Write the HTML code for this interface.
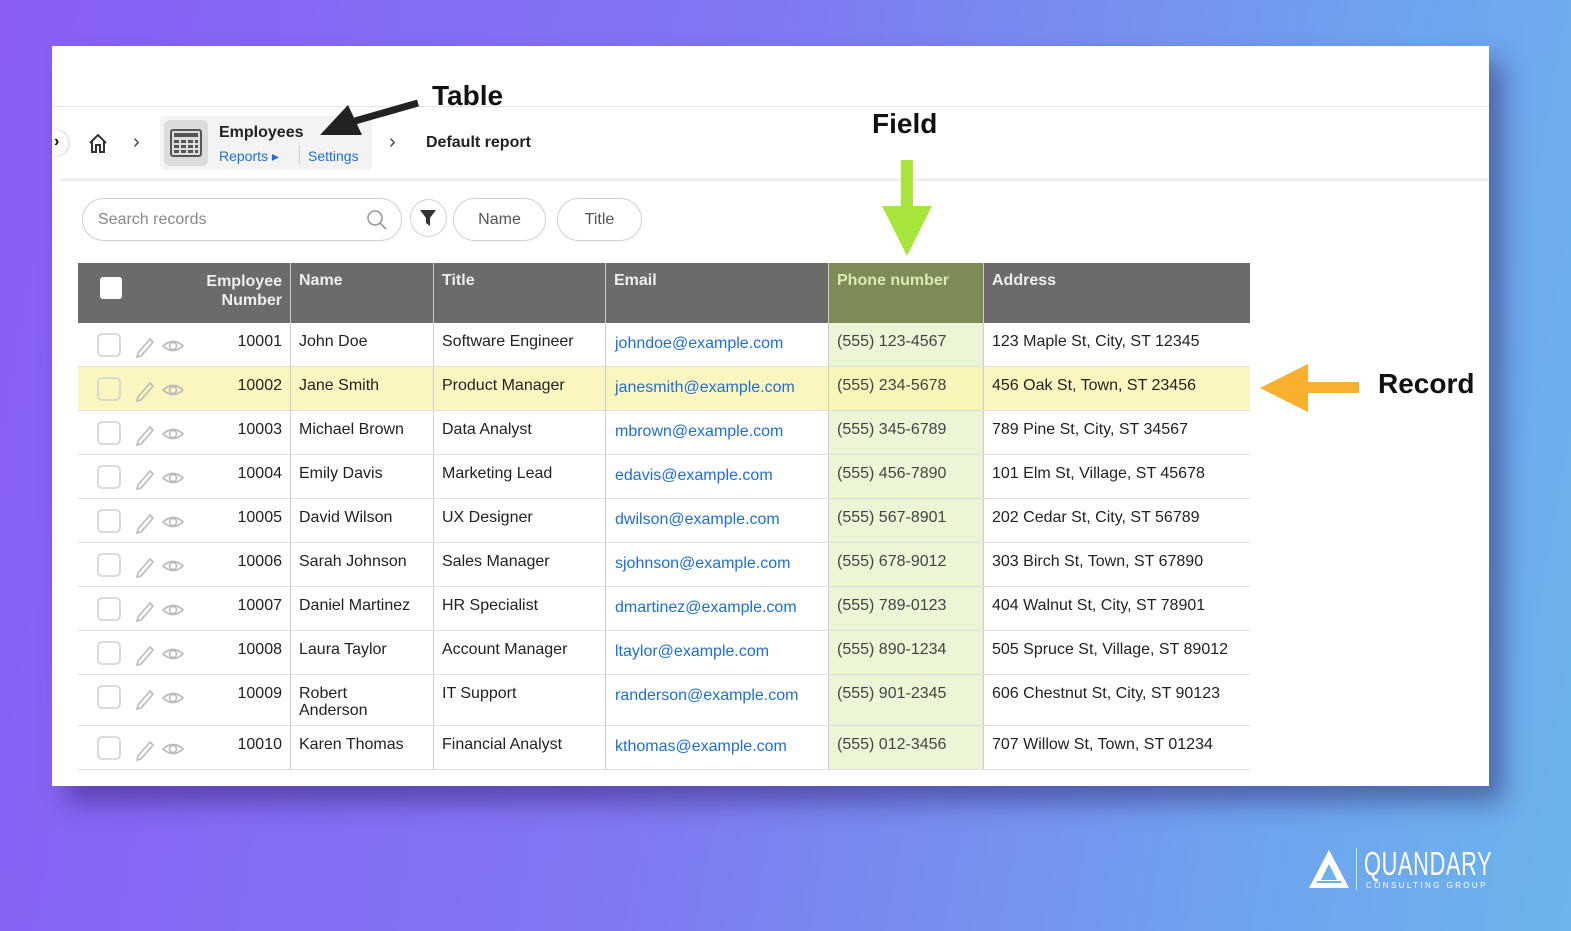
<!DOCTYPE html>
<html><head><meta charset="utf-8"><style>
*{margin:0;padding:0;box-sizing:border-box}
body{width:1571px;height:931px;overflow:hidden;position:relative;font-family:"Liberation Sans",sans-serif;background:linear-gradient(100deg,#8a5ef6 0%,#7f78f2 45%,#6fa2ee 80%,#6cb4ec 100%)}
.card{position:absolute;left:52px;top:46px;width:1437px;height:740px;background:#fff;box-shadow:14px 16px 24px rgba(40,20,90,.45)}
.a{position:absolute;white-space:nowrap}
.t{font-size:16px;color:#222}
.lnk{color:#1d6fd6}
.hd{font-size:16px;font-weight:bold;color:#eee}
.row{position:absolute;left:78px;width:1172px;border-bottom:1.5px solid #e0e0e0}
.vl{position:absolute;width:1px;background:#ddd}
</style></head><body>
<div class="card"></div>
<div class="a" style="left:52px;top:106px;width:1437px;height:1px;background:#e5e5e5"></div>
<div class="a" style="left:60px;top:178px;width:1429px;height:3px;background:#f0f0f0"></div>
<div class="a" style="left:52px;top:130px;width:16px;height:26px;border-radius:0 13px 13px 0;background:#fff;box-shadow:1px 0 3px rgba(0,0,0,.2)"></div>
<div class="a" style="left:54px;top:133px;font-size:16px;font-weight:bold">›</div>
<svg class="a" style="left:87px;top:132px" width="22" height="22" viewBox="0 0 22 22" fill="none" stroke="#333" stroke-width="2"><path d="M3 11 L11 3 L19 11 M5 9 V20 H9 V13 H13 V20 H17 V9"/></svg>
<div class="a" style="left:133px;top:131px;font-size:20px;color:#444">›</div>
<div class="a" style="left:160px;top:116px;width:212px;height:54px;background:#f3f3f3;border-radius:4px"></div>
<div class="a" style="left:164px;top:120px;width:44px;height:46px;background:#dcdcdc;border-radius:6px"></div>
<svg class="a" style="left:170px;top:129px" width="32" height="28" viewBox="0 0 32 28"><rect x="1" y="1" width="30" height="26" rx="2" fill="none" stroke="#555" stroke-width="2"/><rect x="4" y="4" width="24" height="4" fill="#555"/><g fill="#555"><rect x="4" y="11" width="5" height="3"/><rect x="11" y="11" width="5" height="3"/><rect x="18" y="11" width="5" height="3"/><rect x="25" y="11" width="3" height="3"/><rect x="4" y="16" width="5" height="3"/><rect x="11" y="16" width="5" height="3"/><rect x="18" y="16" width="5" height="3"/><rect x="25" y="16" width="3" height="3"/><rect x="4" y="21" width="5" height="3"/><rect x="11" y="21" width="5" height="3"/><rect x="18" y="21" width="5" height="3"/><rect x="25" y="21" width="3" height="3"/></g></svg>
<div class="a" style="left:219px;top:124px;font-size:16px;font-weight:bold;color:#222">Employees</div>
<div class="a lnk" style="left:219px;top:148px;font-size:14px">Reports ▸</div>
<div class="a" style="left:299px;top:146px;width:1px;height:18px;background:#ccc"></div>
<div class="a lnk" style="left:308px;top:148px;font-size:14px">Settings</div>
<div class="a" style="left:389px;top:131px;font-size:20px;color:#444">›</div>
<div class="a" style="left:426px;top:134px;font-size:16px;font-weight:bold;color:#222">Default report</div>
<div class="a" style="left:432px;top:80px;font-size:28px;font-weight:bold;color:#111">Table</div>
<svg class="a" style="left:315px;top:95px" width="110" height="50" viewBox="0 0 110 50"><path d="M103 8 L40 26" stroke="#222" stroke-width="7"/><path d="M5 40 L33 10 L47 40 Z" fill="#222"/></svg>
<div class="a" style="left:872px;top:108px;font-size:28px;font-weight:bold;color:#111">Field</div>
<svg class="a" style="left:880px;top:160px" width="54" height="100" viewBox="0 0 54 100"><rect x="21" y="0" width="12" height="50" fill="#a6e63a"/><path d="M2 46 L52 46 L27 96 Z" fill="#a6e63a"/></svg>
<svg class="a" style="left:1258px;top:362px" width="104" height="52" viewBox="0 0 104 52"><rect x="45" y="20" width="56" height="11" fill="#f9b02e"/><path d="M2 26 L50 2 L50 50 Z" fill="#f9b02e"/></svg>
<div class="a" style="left:1378px;top:368px;font-size:28px;font-weight:bold;color:#111">Record</div>
<div class="a" style="left:82px;top:198px;width:320px;height:43px;border:1.5px solid #cfcfcf;border-radius:22px"></div>
<div class="a" style="left:98px;top:211px;font-size:16px;color:#888">Search records</div>
<svg class="a" style="left:366px;top:209px" width="22" height="22" viewBox="0 0 22 22" fill="none" stroke="#999" stroke-width="1.6"><circle cx="9" cy="9" r="7"/><path d="M14 14 L20 20"/></svg>
<div class="a" style="left:410px;top:199px;width:37px;height:38px;border:1.5px solid #cfcfcf;border-radius:50%"></div>
<svg class="a" style="left:419px;top:209px" width="18" height="18" viewBox="0 0 18 18"><path d="M1 1 H17 L11 9 V17 L7 14 V9 Z" fill="#333"/></svg>
<div class="a" style="left:453px;top:198px;width:93px;height:43px;border:1.5px solid #cfcfcf;border-radius:22px;text-align:center;line-height:42px;font-size:16px;color:#555">Name</div>
<div class="a" style="left:557px;top:198px;width:85px;height:43px;border:1.5px solid #cfcfcf;border-radius:22px;text-align:center;line-height:42px;font-size:16px;color:#555">Title</div>
<div class="a" style="left:78px;top:263px;width:1172px;height:60px;background:#6b6b6b"></div>
<div class="a" style="left:828px;top:263px;width:155px;height:60px;background:#7d8c57"></div>
<div class="a" style="left:828px;top:323px;width:155px;height:447px;background:#eaf6d6"></div>
<div class="a" style="left:78px;top:367px;width:1172px;height:44px;background:rgba(250,245,180,.85)"></div>
<div class="a" style="left:100px;top:277px;width:22px;height:22px;background:#fff;border-radius:3px"></div>
<div class="a hd" style="left:190px;top:272px;width:92px;text-align:right;line-height:19px">Employee<br>Number</div>
<div class="a hd" style="left:299px;top:272px">Name</div>
<div class="a hd" style="left:442px;top:272px">Title</div>
<div class="a hd" style="left:614px;top:272px">Email</div>
<div class="a hd" style="left:837px;top:272px;color:#d6ecb0">Phone number</div>
<div class="a hd" style="left:992px;top:272px">Address</div>
<div class="vl" style="left:290px;top:263px;height:507px;background:#ccc"></div>
<div class="vl" style="left:433px;top:263px;height:507px;background:#ccc"></div>
<div class="vl" style="left:605px;top:263px;height:507px;background:#ccc"></div>
<div class="vl" style="left:828px;top:263px;height:507px;background:#ccc"></div>
<div class="vl" style="left:983px;top:263px;height:507px;background:#ccc"></div>
<div class="row" style="top:323px;height:44px"></div>
<div class="row" style="top:367px;height:44px"></div>
<div class="row" style="top:411px;height:44px"></div>
<div class="row" style="top:455px;height:44px"></div>
<div class="row" style="top:499px;height:44px"></div>
<div class="row" style="top:543px;height:44px"></div>
<div class="row" style="top:587px;height:44px"></div>
<div class="row" style="top:631px;height:44px"></div>
<div class="row" style="top:675px;height:51px"></div>
<div class="row" style="top:726px;height:44px"></div>

<svg class="a" style="left:96px;top:331px" width="96" height="440" viewBox="0 0 96 440" fill="none" stroke="#bbb" stroke-width="1.6">
<defs><g id="ic"><rect x="2" y="3" width="22" height="22" rx="4" stroke="#d0d0d0"/><path d="M42 22 L54 8 L57 11 L45 25 L41 26 Z"/><path d="M67 15 Q77 6 87 15 Q77 24 67 15 Z"/><circle cx="77" cy="15" r="3.5"/></g></defs>
<use href="#ic" y="0"/><use href="#ic" y="44"/><use href="#ic" y="88"/><use href="#ic" y="132"/><use href="#ic" y="176"/><use href="#ic" y="220"/><use href="#ic" y="264"/><use href="#ic" y="308"/><use href="#ic" y="352"/><use href="#ic" y="403"/>
</svg>

<div class="a t" style="left:190px;top:333px;width:92px;text-align:right">10001</div>
<div class="a t" style="left:190px;top:377px;width:92px;text-align:right">10002</div>
<div class="a t" style="left:190px;top:421px;width:92px;text-align:right">10003</div>
<div class="a t" style="left:190px;top:465px;width:92px;text-align:right">10004</div>
<div class="a t" style="left:190px;top:509px;width:92px;text-align:right">10005</div>
<div class="a t" style="left:190px;top:553px;width:92px;text-align:right">10006</div>
<div class="a t" style="left:190px;top:597px;width:92px;text-align:right">10007</div>
<div class="a t" style="left:190px;top:641px;width:92px;text-align:right">10008</div>
<div class="a t" style="left:190px;top:685px;width:92px;text-align:right">10009</div>
<div class="a t" style="left:190px;top:736px;width:92px;text-align:right">10010</div>

<div class="a t" style="left:299px;top:333px">John Doe</div>
<div class="a t" style="left:299px;top:377px">Jane Smith</div>
<div class="a t" style="left:299px;top:421px">Michael Brown</div>
<div class="a t" style="left:299px;top:465px">Emily Davis</div>
<div class="a t" style="left:299px;top:509px">David Wilson</div>
<div class="a t" style="left:299px;top:553px">Sarah Johnson</div>
<div class="a t" style="left:299px;top:597px">Daniel Martinez</div>
<div class="a t" style="left:299px;top:641px">Laura Taylor</div>
<div class="a t" style="left:299px;top:685px;line-height:17px">Robert<br>Anderson</div>
<div class="a t" style="left:299px;top:736px">Karen Thomas</div>

<div class="a t" style="left:442px;top:333px">Software Engineer</div>
<div class="a t" style="left:442px;top:377px">Product Manager</div>
<div class="a t" style="left:442px;top:421px">Data Analyst</div>
<div class="a t" style="left:442px;top:465px">Marketing Lead</div>
<div class="a t" style="left:442px;top:509px">UX Designer</div>
<div class="a t" style="left:442px;top:553px">Sales Manager</div>
<div class="a t" style="left:442px;top:597px">HR Specialist</div>
<div class="a t" style="left:442px;top:641px">Account Manager</div>
<div class="a t" style="left:442px;top:685px">IT Support</div>
<div class="a t" style="left:442px;top:736px">Financial Analyst</div>

<div class="a t lnk" style="left:615px;top:335px">johndoe@example.com</div>
<div class="a t lnk" style="left:615px;top:379px">janesmith@example.com</div>
<div class="a t lnk" style="left:615px;top:423px">mbrown@example.com</div>
<div class="a t lnk" style="left:615px;top:467px">edavis@example.com</div>
<div class="a t lnk" style="left:615px;top:511px">dwilson@example.com</div>
<div class="a t lnk" style="left:615px;top:555px">sjohnson@example.com</div>
<div class="a t lnk" style="left:615px;top:599px">dmartinez@example.com</div>
<div class="a t lnk" style="left:615px;top:643px">ltaylor@example.com</div>
<div class="a t lnk" style="left:615px;top:687px">randerson@example.com</div>
<div class="a t lnk" style="left:615px;top:738px">kthomas@example.com</div>

<div class="a t" style="left:837px;top:333px;color:#444">(555) 123-4567</div>
<div class="a t" style="left:837px;top:377px;color:#444">(555) 234-5678</div>
<div class="a t" style="left:837px;top:421px;color:#444">(555) 345-6789</div>
<div class="a t" style="left:837px;top:465px;color:#444">(555) 456-7890</div>
<div class="a t" style="left:837px;top:509px;color:#444">(555) 567-8901</div>
<div class="a t" style="left:837px;top:553px;color:#444">(555) 678-9012</div>
<div class="a t" style="left:837px;top:597px;color:#444">(555) 789-0123</div>
<div class="a t" style="left:837px;top:641px;color:#444">(555) 890-1234</div>
<div class="a t" style="left:837px;top:685px;color:#444">(555) 901-2345</div>
<div class="a t" style="left:837px;top:736px;color:#444">(555) 012-3456</div>

<div class="a t" style="left:992px;top:333px">123 Maple St, City, ST 12345</div>
<div class="a t" style="left:992px;top:377px">456 Oak St, Town, ST 23456</div>
<div class="a t" style="left:992px;top:421px">789 Pine St, City, ST 34567</div>
<div class="a t" style="left:992px;top:465px">101 Elm St, Village, ST 45678</div>
<div class="a t" style="left:992px;top:509px">202 Cedar St, City, ST 56789</div>
<div class="a t" style="left:992px;top:553px">303 Birch St, Town, ST 67890</div>
<div class="a t" style="left:992px;top:597px">404 Walnut St, City, ST 78901</div>
<div class="a t" style="left:992px;top:641px">505 Spruce St, Village, ST 89012</div>
<div class="a t" style="left:992px;top:685px">606 Chestnut St, City, ST 90123</div>
<div class="a t" style="left:992px;top:736px">707 Willow St, Town, ST 01234</div>

<svg class="a" style="left:1307px;top:848px" width="44" height="42" viewBox="0 0 44 42"><path d="M22 2 L42 40 H2 Z" fill="#fff"/><path d="M22 16 L30 32 H14 Z" fill="#6cb0ee"/><path d="M10 34 H34" stroke="#6cb0ee" stroke-width="2"/></svg>
<div class="a" style="left:1356px;top:848px;width:1px;height:42px;background:rgba(255,255,255,.7)"></div>
<div class="a" style="left:1364px;top:845px;font-size:33px;color:#fff;transform:scaleX(.66);transform-origin:left;letter-spacing:1px">QUANDARY</div>
<div class="a" style="left:1366px;top:881px;font-size:8px;color:#fff;letter-spacing:2.4px">CONSULTING GROUP</div>
</body></html>
